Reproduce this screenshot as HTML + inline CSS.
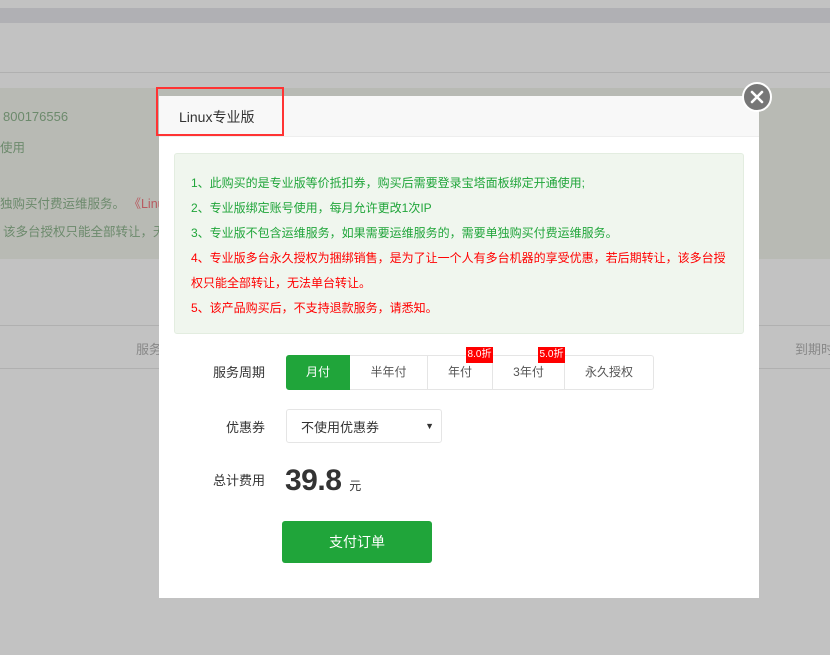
<!DOCTYPE html>
<html><head><meta charset="utf-8"><style>
*{margin:0;padding:0;box-sizing:border-box}
body{width:830px;height:655px;overflow:hidden;background:#c2c2c2;font-family:"Liberation Sans","Noto Sans CJK SC",sans-serif;font-size:12px;position:relative}
.abs{position:absolute}
.bg-txt{color:#6c8a6c;font-size:12.5px;white-space:nowrap}
.modal{left:159px;top:96px;width:600px;height:502px;background:#fff}
.hd{left:0;top:0;width:600px;height:41px;background:#f8f8f8;border-bottom:1px solid #eee}
.notice{left:15px;top:57px;width:570px;height:181px;background:#f0f6ee;border:1px solid #e3ede0;border-radius:3px}
.notice div{position:absolute;left:16px;white-space:nowrap;font-size:12px}
.g{color:#20a53a}.r{color:#f00}
.lbl{font-size:13px;color:#333;text-align:right;width:80px;white-space:nowrap}
.tab{top:259px;height:35px;border:1px solid #e5e5e5;border-left:none;text-align:center;line-height:33px;font-size:12px;color:#555;background:#fff}
.badge{background:#f00;color:#fff;font-size:10px;height:16px;line-height:16px;width:27px;text-align:center;top:251px}
</style></head><body>
<div class="abs" style="left:0;top:8px;width:830px;height:15px;background:#b0b0b4"></div>
<div class="abs" style="left:0;top:72px;width:830px;height:1px;background:#b0b0b0"></div>
<div class="abs" style="left:0;top:88px;width:830px;height:171px;background:#b8bab4"></div>
<div class="abs bg-txt" style="left:3px;top:109px;font-size:13px">800176556</div>
<div class="abs bg-txt" style="left:0;top:137px">使用</div>
<div class="abs bg-txt" style="left:0;top:193px">独购买付费运维服务。 <span style="color:#b85a60">《Linux</span></div>
<div class="abs bg-txt" style="left:3px;top:221px">该多台授权只能全部转让，无</div>
<div class="abs" style="left:0;top:325px;width:830px;height:1px;background:#b0b0b0"></div>
<div class="abs" style="left:0;top:368px;width:830px;height:1px;background:#b0b0b0"></div>
<div class="abs" style="left:136px;top:339px;color:#888;font-size:13px">服务</div>
<div class="abs" style="left:795px;top:339px;color:#888;font-size:13px;white-space:nowrap">到期时</div>

<div class="abs modal">
 <div class="abs hd"></div>
 <div class="abs" style="left:20px;top:11px;font-size:14px;color:#333;white-space:nowrap">Linux专业版</div>
 <div class="abs notice">
  <div class="g" style="top:20px">1、此购买的是专业版等价抵扣券，购买后需要登录宝塔面板绑定开通使用;</div>
  <div class="g" style="top:45px">2、专业版绑定账号使用，每月允许更改1次IP</div>
  <div class="g" style="top:70px">3、专业版不包含运维服务，如果需要运维服务的，需要单独购买付费运维服务。</div>
  <div class="r" style="top:95px">4、专业版多台永久授权为捆绑销售，是为了让一个人有多台机器的享受优惠，若后期转让，该多台授</div>
  <div class="r" style="top:120px">权只能全部转让，无法单台转让。</div>
  <div class="r" style="top:145px">5、该产品购买后，不支持退款服务，请悉知。</div>
 </div>
 <div class="abs lbl" style="left:26px;top:266px">服务周期</div>
 <div class="abs tab" style="left:127px;width:64px;background:#20a53a;border:1px solid #20a53a;color:#fff;border-radius:3px 0 0 3px">月付</div>
 <div class="abs tab" style="left:191px;width:78px">半年付</div>
 <div class="abs tab" style="left:269px;width:65px">年付</div>
 <div class="abs tab" style="left:334px;width:72px">3年付</div>
 <div class="abs tab" style="left:406px;width:89px;border-radius:0 3px 3px 0">永久授权</div>
 <div class="abs badge" style="left:307px">8.0折</div>
 <div class="abs badge" style="left:379px">5.0折</div>
 <div class="abs lbl" style="left:26px;top:321px">优惠券</div>
 <div class="abs" style="left:127px;top:313px;width:156px;height:34px;border:1px solid #e5e5e5;border-radius:3px;font-size:13px;color:#333;line-height:36px;padding-left:14px">不使用优惠券<span style="position:absolute;right:7px;top:-2px;font-size:9px">▼</span></div>
 <div class="abs lbl" style="left:26px;top:374px">总计费用</div>
 <div class="abs" style="left:126px;top:368px;font-size:30px;color:#333;white-space:nowrap;font-weight:bold;letter-spacing:-0.5px">39.8 <span style="font-size:12px;font-weight:normal">元</span></div>
 <div class="abs" style="left:123px;top:425px;width:150px;height:42px;background:#20a53a;border-radius:3px;color:#fff;font-size:14px;text-align:center;line-height:42px">支付订单</div>
</div>
<div class="abs" style="left:156px;top:87px;width:128px;height:49px;border:2px solid #f33"></div>
<div class="abs" style="left:742px;top:82px;width:30px;height:30px;border-radius:50%;background:#777;border:2px solid #fff">
 <svg width="26" height="26" style="position:absolute;left:0;top:0"><path d="M8 8L18 18M18 8L8 18" stroke="#fff" stroke-width="2.6" stroke-linecap="round"/></svg>
</div>
</body></html>
